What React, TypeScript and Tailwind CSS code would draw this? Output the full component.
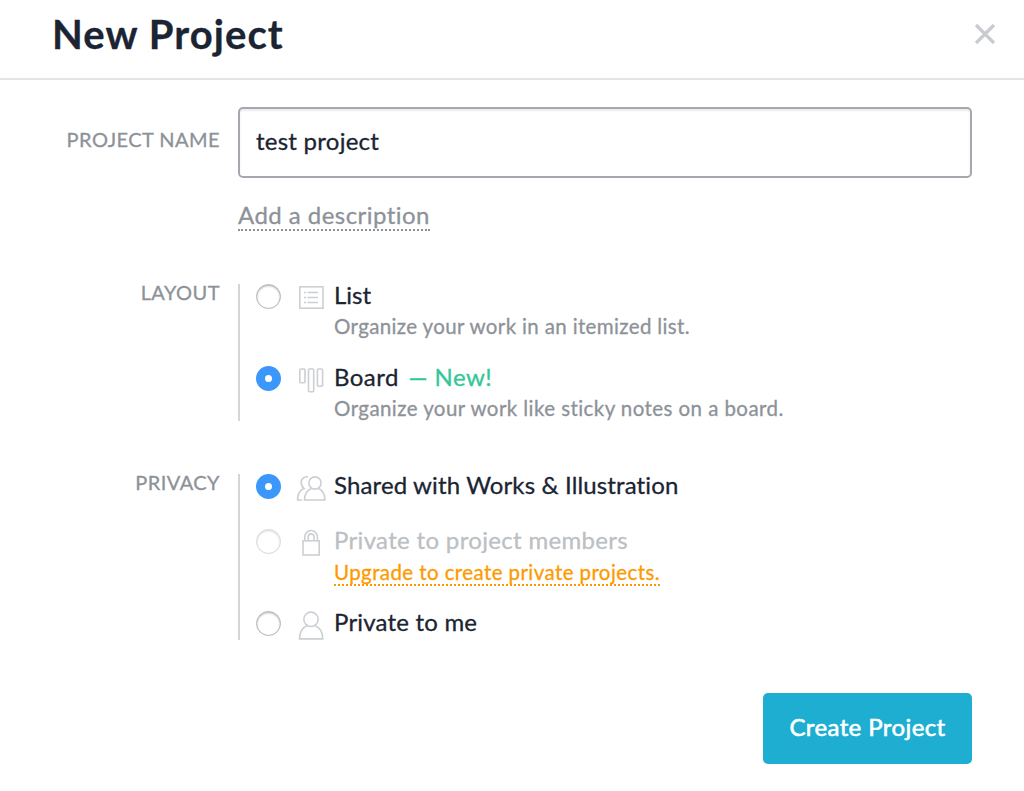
import { useState, type ReactNode } from "react";

function ListIcon() {
  return (
    <svg width="26" height="26" viewBox="0 0 26 26" fill="none" stroke="currentColor" strokeWidth="1.6">
      <rect x="1.8" y="2.8" width="23.2" height="21.4" />
      <path d="M6 8.500h2M6 13.500h2M6 18.500h2M9.500 8.500h10.500M9.500 13.500h10.500M9.500 18.500h10.500" />
    </svg>
  );
}

function BoardIcon() {
  return (
    <svg width="26" height="28" viewBox="0 0 26 28" fill="none" stroke="currentColor" strokeWidth="1.6">
      <rect x="1.8" y="3" width="5.2" height="13.8" rx="1" />
      <rect x="10.5" y="3" width="5.2" height="22.8" rx="1" />
      <rect x="19.4" y="3" width="5.2" height="17.2" rx="1" />
    </svg>
  );
}

function PeopleIcon() {
  return (
    <svg width="30" height="28" viewBox="0 0 30 28" fill="none" stroke="currentColor" strokeWidth="1.6">
      <circle cx="19" cy="9" r="6.1" />
      <path d="M15.500 14.500C11.500 16 8.600 20 8.400 26H28.900C28.700 20 26.500 16 22.500 14.500" />
      <path d="M12 2.900C8 2.300 5.200 5 5.200 8.500C5.200 11 6.200 13 8 14.400C3.800 16 1.600 20 1.500 26H6" />
    </svg>
  );
}

function LockIcon() {
  return (
    <svg width="20" height="28" viewBox="0 0 20 28" fill="none" stroke="currentColor" strokeWidth="1.6">
      <rect x="2" y="11.8" width="16.2" height="14.2" />
      <path d="M3.800 11.500V7.800a6.300 6.300 0 0 1 12.600 0V11.500M7.200 11.500V7.800a2.900 2.900 0 0 1 5.800 0V11.500" />
    </svg>
  );
}

function PersonIcon() {
  return (
    <svg width="26" height="29" viewBox="0 0 26 29" fill="none" stroke="currentColor" strokeWidth="1.6">
      <circle cx="13" cy="8.3" r="7.2" />
      <path d="M9 14.800C4.600 16.500 1.700 20.800 1.500 27.900H24.800C24.600 20.800 21.600 16.500 17 14.800" />
    </svg>
  );
}

function Row({ label, className, children }: { label: string; className?: string; children: ReactNode }) {
  return (
    <div className={`flex ${className ?? ""}`}>
      <div className="-mt-0.5 w-[220px] shrink-0 text-right text-[20px] leading-5 tracking-[0.45px] text-[#8d9299]">
        {label}
      </div>
      <div className="mr-[52px] ml-[18px] flex-1">{children}</div>
    </div>
  );
}

type OptionProps = {
  name: string;
  icon: ReactNode;
  checked: boolean;
  disabled?: boolean;
  onSelect: () => void;
  className?: string;
  children: ReactNode;
};

function Option({ name, icon, checked, disabled, onSelect, className, children }: OptionProps) {
  return (
    <label className={`flex items-start ${className ?? ""}`}>
      <input
        type="radio"
        name={name}
        checked={checked}
        disabled={disabled}
        onChange={onSelect}
        className="size-[25px] shrink-0 appearance-none rounded-full border border-[#b4b4b4] bg-white shadow-[inset_0_1px_2px_rgba(0,0,0,0.3)] checked:border-9 checked:border-[#3c97fb] checked:shadow-none disabled:opacity-50"
      />
      <span className="ml-[15px] flex w-[30px] shrink-0 justify-center text-[#cccfd3]">{icon}</span>
      <span className="-mt-px ml-2 block">{children}</span>
    </label>
  );
}

export default function App() {
  const [name, setName] = useState("test project");
  const [layout, setLayout] = useState("board");
  const [privacy, setPrivacy] = useState("shared");

  return (
    <div className="h-[791px] w-[1024px] overflow-hidden bg-white font-['Lato','Liberation_Sans',sans-serif] text-[24px] text-[#1b2432] [font-variant-ligatures:none] [-webkit-text-stroke:0.3px]">
      <header className="flex h-20 items-start justify-between border-b-2 border-[#e4e4e5] pr-[28px] pl-[52px]">
        <h1 className="pt-[10px] text-[40px] leading-12 font-bold tracking-[1.1px]">New Project</h1>
        <button aria-label="Close" className="mt-[23px] text-[#c9cbcf]">
          <svg width="22" height="22" viewBox="0 0 22 22" stroke="currentColor" strokeWidth="3.2">
            <path d="M2 2l18 18M20 2L2 20" />
          </svg>
        </button>
      </header>

      <Row label="PROJECT NAME" className="pt-[27px] [&>div:first-child]:pt-6">
        <input
          value={name}
          onChange={(e) => setName(e.target.value)}
          className="block h-[71px] w-full rounded-[5px] border-2 border-[#a5a9af] px-4 pb-[5px] tracking-[0.25px] shadow-[inset_0_2px_2px_rgba(0,0,0,0.08)] outline-none"
        />
        <a className="mt-6 inline-block border-b-2 border-dotted border-[#8d9299] pb-0.5 leading-[25px] tracking-[0.45px] text-[#8d9299]">
          Add a description
        </a>
      </Row>

      <Row label="LAYOUT" className="mt-[51px]">
        <div className="h-[137px] border-l-2 border-[#d3d5d7] pl-4">
          <Option name="layout" icon={<ListIcon />} checked={layout === "list"} onSelect={() => setLayout("list")}>
            <span className="block leading-6">List</span>
            <span className="mt-[7px] block text-[20.5px] leading-6 tracking-[0.36px] text-[#8d9299]">
              Organize your work in an itemized list.
            </span>
          </Option>
          <Option
            name="layout"
            icon={<BoardIcon />}
            checked={layout === "board"}
            onSelect={() => setLayout("board")}
            className="mt-7"
          >
            <span className="block leading-6 tracking-[0.45px]">
              Board <span className="ml-[3px] text-[#33c796]">— New!</span>
            </span>
            <span className="mt-[7px] block text-[20.5px] leading-6 tracking-[0.43px] text-[#8d9299]">
              Organize your work like sticky notes on a board.
            </span>
          </Option>
        </div>
      </Row>

      <Row label="PRIVACY" className="mt-[53px]">
        <div className="h-[166px] border-l-2 border-[#d3d5d7] pl-4">
          <Option
            name="privacy"
            icon={<PeopleIcon />}
            checked={privacy === "shared"}
            onSelect={() => setPrivacy("shared")}
            className="h-[55px]"
          >
            <span className="block leading-6 tracking-[0.13px]">Shared with Works &amp; Illustration</span>
          </Option>
          <Option
            name="privacy"
            icon={<LockIcon />}
            checked={privacy === "members"}
            disabled
            onSelect={() => setPrivacy("members")}
            className="h-[82px]"
          >
            <span className="block leading-6 tracking-[0.33px] text-[#bcbfc4]">Private to project members</span>
            <a className="mt-2 inline-block border-b-2 border-dotted border-[#fd9a00] text-[20.5px] leading-6 tracking-[0.41px] text-[#fd9a00]">
              Upgrade to create private projects.
            </a>
          </Option>
          <Option
            name="privacy"
            icon={<PersonIcon />}
            checked={privacy === "me"}
            onSelect={() => setPrivacy("me")}
          >
            <span className="block leading-6 tracking-[0.2px]">Private to me</span>
          </Option>
        </div>
      </Row>

      <div className="mt-[53px] flex justify-end pr-[52px]">
        <button className="h-[71px] w-[209px] rounded-[5px] bg-[#1daed2] pb-[3px] tracking-[0.4px] text-white [-webkit-text-stroke:0.6px]">
          Create Project
        </button>
      </div>
    </div>
  );
}
